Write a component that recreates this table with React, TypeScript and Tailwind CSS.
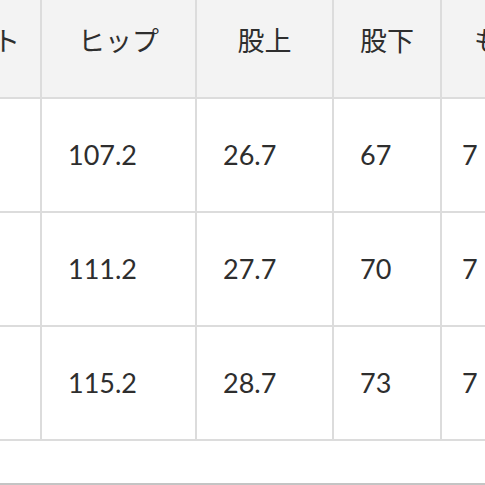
const headers = ['ウエスト', 'ヒップ', '股上', '股下', 'もも周り'];

const rows = [
  ['76', '107.2', '26.7', '67', '7'],
  ['80', '111.2', '27.7', '70', '7'],
  ['84', '115.2', '28.7', '73', '7'],
];

export default function App() {
  return (
    <div
      className="h-[485px] w-[485px] overflow-hidden bg-white text-[27px] text-[#2e2e2e]"
      style={{ fontFamily: 'Lato, "Noto Sans CJK JP", sans-serif' }}
    >
      <div className="-ml-[108px] -mt-[15px] grid w-[724px] grid-cols-[150px_155px_137px_108px_174px]">
        {headers.map((h) => (
          <div
            key={h}
            className="flex h-[114px] items-center justify-center whitespace-nowrap border-b-2 border-r-2 border-[#dcdcdc] bg-[#f3f3f3]"
          >
            {h}
          </div>
        ))}
        {rows.map((row, i) =>
          row.map((v, j) => (
            <div
              key={`${i}-${j}`}
              className={
                j === 4
                  ? 'flex h-[114px] items-center whitespace-nowrap border-b-2 border-r-2 border-[#dcdcdc] bg-white pl-[20px]'
                  : 'flex h-[114px] items-center whitespace-nowrap border-b-2 border-r-2 border-[#dcdcdc] bg-white pl-[26px]'
              }
            >
              {v}
            </div>
          )),
        )}
      </div>
      <div className="mt-[42px] h-[2px] bg-[#c4c4c4]" />
    </div>
  );
}
